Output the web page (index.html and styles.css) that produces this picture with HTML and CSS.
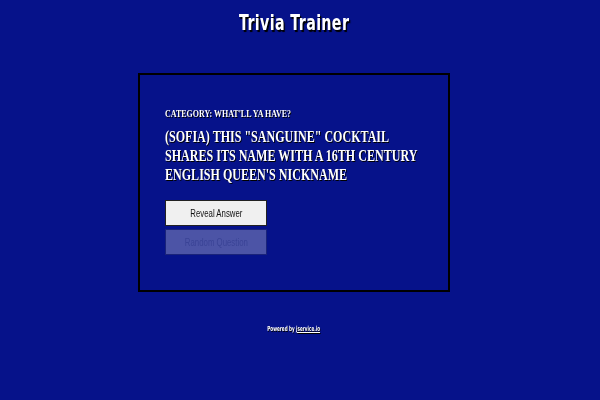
FILE: index.html
```html
<!DOCTYPE html>
<html>
<head>
<meta charset="utf-8">
<link rel="stylesheet" href="styles.css">
</head>
<body>
<div class="page">
  <h1 class="title"><span class="sq sq-c">Trivia Trainer</span></h1>
  <div class="card">
    <div class="category"><span class="sq">Category: What'll Ya Have?</span></div>
    <div class="question"><span class="sq">(Sofia) This "sanguine" cocktail<br>shares its name with a 16th century<br>English queen's nickname</span></div>
    <div class="actions">
      <button class="btn"><span class="sq sq-c">Reveal Answer</span></button>
      <button class="btn btn-disabled" disabled><span class="sq sq-c">Random Question</span></button>
    </div>
  </div>
  <div class="footer"><span class="sq sq-c">Powered by <a href="#" class="link">jservice.io</a></span></div>
</div>
</body>
</html>
```
FILE: styles.css
```css
html, body {
  margin: 0;
  padding: 0;
  background: #06128a;
  height: 100%;
}
.page {
  width: 588px;
  display: flex;
  flex-direction: column;
  align-items: center;
}
.sq {
  display: inline-block;
  transform: scaleX(0.74);
  transform-origin: left center;
  white-space: nowrap;
}
.sq-c {
  transform-origin: center center;
}
.title {
  margin: 10px 0 0;
  font-family: "DejaVu Sans", sans-serif;
  font-weight: bold;
  font-size: 21px;
  line-height: 26px;
  color: #fff;
  text-shadow: 2px 2px 1px #000;
  letter-spacing: 0.5px;
}
.title .sq {
  transform: scaleX(0.68);
}
.card {
  margin-top: 37px;
  border: 2px solid #000;
  display: flex;
  flex-direction: column;
  padding-left: 25px;
  padding-top: 32px;
  box-sizing: border-box;
  width: 312px;
  height: 219px;
}
.category {
  font-family: "Liberation Serif", serif;
  font-weight: bold;
  font-size: 11px;
  line-height: 12px;
  text-transform: uppercase;
  color: #fff;
  text-shadow: 1px 1px 0 #000;
}
.category .sq {
  transform: scaleX(0.725);
}
.question {
  margin-top: 8px;
  font-family: "Liberation Serif", serif;
  font-weight: bold;
  font-size: 16.5px;
  line-height: 19px;
  text-transform: uppercase;
  color: #fff;
  text-shadow: 1px 1px 0 #000;
}
.question .sq {
  transform: scaleX(0.73);
}
.actions {
  margin-top: 16px;
  display: flex;
  flex-direction: column;
  gap: 3px;
}
.btn {
  width: 102px;
  height: 26px;
  border: 1px solid #222;
  background: #f0f0f0;
  font-family: "Liberation Sans", Arial, sans-serif;
  font-size: 11.5px;
  color: #111;
  padding: 0;
}
.btn .sq {
  transform: scaleX(0.68);
}
.btn-disabled {
  background: #4c54a6;
  color: #3a4396;
  border-color: #1a237a;
}
.footer {
  margin-top: 33px;
  font-family: "DejaVu Sans", sans-serif;
  font-weight: bold;
  font-size: 7px;
  color: #fff;
  text-shadow: 1px 1px 0 #000;
}
.footer .sq {
  transform: scaleX(0.59);
}
.link {
  color: #fff;
}
```
